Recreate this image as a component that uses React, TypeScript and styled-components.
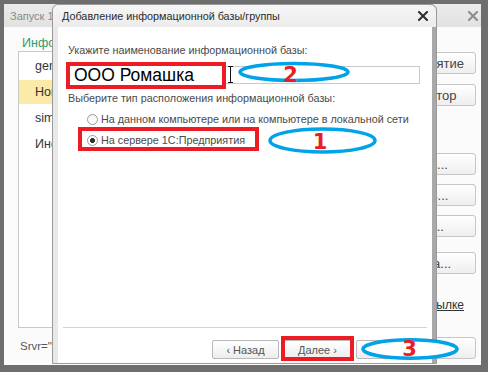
import React from 'react';
import styled, { createGlobalStyle } from 'styled-components';

const GlobalStyle = createGlobalStyle`
  html, body {
    margin: 0;
    padding: 0;
    background: #6e6e6e;
  }
  body {
    font-family: 'Liberation Sans', Arial, sans-serif;
  }
`;

const Desktop = styled.div`
  position: relative;
  width: 488px;
  height: 372px;
  overflow: hidden;
  background: #6e6e6e;
`;

/* ---------- back window (launcher) ---------- */

const BackWindow = styled.div`
  position: absolute;
  left: 4px;
  top: 4px;
  width: 477px;
  height: 361px;
  display: flex;
  flex-direction: column;
  background: #fbfbfb;
`;

const BackTitle = styled.div`
  flex: 0 0 23px;
  display: flex;
  align-items: center;
  justify-content: space-between;
  padding: 0 3px 0 6px;
  background: linear-gradient(#ececec, #e1e1e1);
  color: #8a8a8a;
  font-size: 11px;
`;

const BackBody = styled.div`
  flex: 1;
  min-height: 0;
  display: flex;
  gap: 10px;
  padding: 8px 5px 6px 14px;
`;

const LeftColumn = styled.div`
  flex: 1;
  display: flex;
  flex-direction: column;
  min-width: 0;
`;

const BasesHeading = styled.div`
  height: 16px;
  line-height: 16px;
  padding-left: 4px;
  color: #2f9a6c;
  font-size: 12.5px;
`;

const BaseList = styled.div`
  flex: 1;
  border: 1px solid #c9c9c9;
  background: #fff;
`;

const BaseItem = styled.div<{ $selected?: boolean }>`
  height: 24px;
  margin: 2px 0;
  line-height: 24px;
  padding-left: 16px;
  font-size: 12.5px;
  color: #333;
  white-space: nowrap;
  background: ${(p) => (p.$selected ? '#fbeaa8' : 'transparent')};
`;

const ConnString = styled.div`
  margin: 10px 0 5px 2px;
  height: 16px;
  line-height: 16px;
  font-size: 11.5px;
  color: #555;
  white-space: nowrap;
`;

const RightColumn = styled.div`
  flex: 0 0 120px;
  display: flex;
  flex-direction: column;
  padding-top: 17px;
`;

const SideButton = styled.div<{ $gap?: number }>`
  height: 22px;
  box-sizing: border-box;
  margin-top: ${(p) => p.$gap ?? 0}px;
  border: 1px solid #c6c6c6;
  border-radius: 3px;
  background: linear-gradient(#ffffff, #eeeeee);
  display: flex;
  align-items: center;
  justify-content: center;
  font-size: 13px;
  color: #444;
  white-space: nowrap;
`;

const SideLink = styled.div`
  margin-top: 24px;
  height: 14px;
  line-height: 14px;
  text-align: right;
  padding-right: 12px;
  font-size: 12px;
  color: #333;
  text-decoration: underline;
  white-space: nowrap;
`;

const ExitButton = styled(SideButton)`
  margin-top: auto;
`;

/* ---------- dialog ---------- */

const Dialog = styled.div`
  position: absolute;
  left: 52px;
  top: 4px;
  width: 385px;
  height: 360px;
  box-sizing: border-box;
  display: flex;
  flex-direction: column;
  background: #e8e8e8;
  border: 1px solid #9a9a9a;
  border-radius: 6px 6px 0 0;
  box-shadow: inset -4px 0 0 #a9a9a9;
`;

const DialogTitle = styled.div`
  flex: 0 0 22px;
  display: flex;
  align-items: center;
  justify-content: space-between;
  padding: 0 8px 0 9px;
  border-radius: 6px 6px 0 0;
  background: linear-gradient(#f6f6f6, #ececec);
  color: #2b2b2b;
  font-size: 10.8px;
`;

const DialogBody = styled.div`
  flex: 1;
  margin: 0 4px 0 5px;
  background: #fff;
  display: flex;
  flex-direction: column;
`;

const FieldLabel = styled.div<{ $top: number }>`
  margin: ${(p) => p.$top}px 0 0 10px;
  height: 14px;
  line-height: 14px;
  font-size: 10.8px;
  color: #4a4a4a;
  white-space: nowrap;
`;

const NameInput = styled.div`
  margin: 9px 0 0 10px;
  width: 352px;
  height: 18px;
  box-sizing: border-box;
  border: 1px solid #c9c9c9;
  background: #fff;
`;

const RadioList = styled.div`
  margin-top: 7px;
  padding-left: 29px;
  display: flex;
  flex-direction: column;
  gap: 7px;
`;

const RadioRow = styled.div`
  height: 14px;
  display: flex;
  align-items: center;
  gap: 3px;
  font-size: 10.8px;
  color: #4a4a4a;
  white-space: nowrap;
`;

const RadioDot = styled.span<{ $checked?: boolean }>`
  width: 11px;
  height: 11px;
  box-sizing: border-box;
  border-radius: 50%;
  border: 1px solid #9c9c9c;
  background: ${(p) =>
    p.$checked
      ? 'radial-gradient(circle, #333 0 2.2px, #fff 2.8px)'
      : 'linear-gradient(#f4f4f4, #ffffff)'};
`;

const Spacer = styled.div`
  flex: 1;
`;

const Separator = styled.div`
  height: 1px;
  margin: 0 5px;
  background: #d3d3d3;
`;

const WizardRow = styled.div`
  margin-top: 12px;
  padding: 0 9px 4px 0;
  display: flex;
  justify-content: flex-end;
  gap: 5px;
`;

const WizardButton = styled.div`
  width: 67px;
  height: 19px;
  box-sizing: border-box;
  border: 1px solid #b9b9b9;
  border-radius: 2px;
  background: linear-gradient(#ffffff, #ededed);
  display: flex;
  align-items: center;
  justify-content: center;
  font-size: 11px;
  color: #555;
`;

/* ---------- annotations ---------- */

const RedFrame = styled.div<{ $x: number; $y: number; $w: number; $h: number; $filled?: boolean }>`
  position: absolute;
  left: ${(p) => p.$x}px;
  top: ${(p) => p.$y}px;
  width: ${(p) => p.$w}px;
  height: ${(p) => p.$h}px;
  box-sizing: border-box;
  border: 4px solid #ed1c24;
  background: ${(p) => (p.$filled ? '#fff' : 'transparent')};
  display: flex;
  align-items: center;
  padding-left: 4px;
  font-size: 17.5px;
  color: #000;
  white-space: nowrap;
`;

const Overlay = styled.svg`
  position: absolute;
  left: 0;
  top: 0;
  pointer-events: none;
`;

const CloseIcon = ({ color, size }: { color: string; size: number }) => (
  <svg width={size} height={size} viewBox="0 0 10 10">
    <path d="M1 1L9 9M9 1L1 9" stroke={color} strokeWidth="2" strokeLinecap="square" />
  </svg>
);

const marks = [
  { cx: 294, cy: 72, rx: 54, ry: 8.5, label: '2', tx: 290.5, ty: 82 },
  { cx: 322.5, cy: 140.5, rx: 52.5, ry: 11.5, label: '1', tx: 320, ty: 149 },
  { cx: 410, cy: 349, rx: 47, ry: 9.3, label: '3', tx: 409.5, ty: 356 },
];

const App = () => {
  return (
    <Desktop>
      <GlobalStyle />

      <BackWindow>
        <BackTitle>
          <span>Запуск 1С:Предприятия</span>
          <CloseIcon color="#8c8c8c" size={10} />
        </BackTitle>
        <BackBody>
          <LeftColumn>
            <BasesHeading>Информационные базы</BasesHeading>
            <BaseList>
              <BaseItem>general</BaseItem>
              <BaseItem $selected>Новая база</BaseItem>
              <BaseItem>simple</BaseItem>
              <BaseItem>Инфобаза</BaseItem>
            </BaseList>
            <ConnString>Srvr="localhost";Ref="roma";</ConnString>
          </LeftColumn>
          <RightColumn>
            <SideButton>1С:Предприятие</SideButton>
            <SideButton $gap={10}>Конфигуратор</SideButton>
            <SideButton $gap={47}>Добавить...</SideButton>
            <SideButton $gap={9}>Изменить...</SideButton>
            <SideButton $gap={9}>Удалить...</SideButton>
            <SideButton $gap={15}>Настройка...</SideButton>
            <SideLink>Добавить по ссылке</SideLink>
            <ExitButton>Выход</ExitButton>
          </RightColumn>
        </BackBody>
      </BackWindow>

      <Dialog>
        <DialogTitle>
          <span>Добавление информационной базы/группы</span>
          <CloseIcon color="#2e2e2e" size={10} />
        </DialogTitle>
        <DialogBody>
          <FieldLabel $top={16}>Укажите наименование информационной базы:</FieldLabel>
          <NameInput />
          <FieldLabel $top={7}>Выберите тип расположения информационной базы:</FieldLabel>
          <RadioList>
            <RadioRow>
              <RadioDot />
              На данном компьютере или на компьютере в локальной сети
            </RadioRow>
            <RadioRow>
              <RadioDot $checked />
              На сервере 1С:Предприятия
            </RadioRow>
          </RadioList>
          <Spacer />
          <Separator />
          <WizardRow>
            <WizardButton>‹ Назад</WizardButton>
            <WizardButton>Далее ›</WizardButton>
            <WizardButton>Отмена</WizardButton>
          </WizardRow>
        </DialogBody>
      </Dialog>

      <RedFrame $x={66} $y={62} $w={160} $h={27} $filled>
        ООО Ромашка
      </RedFrame>
      <RedFrame $x={78} $y={127} $w={181} $h={24} />
      <RedFrame $x={281} $y={336} $w={73} $h={25} />

      <Overlay width={488} height={372} viewBox="0 0 488 372">
        <path
          d="M228 66.5h5M230.5 67v15M228 82.5h5"
          stroke="#111"
          strokeWidth="1"
          fill="none"
        />
        {marks.map((m) => (
          <g key={m.label}>
            <ellipse
              cx={m.cx}
              cy={m.cy}
              rx={m.rx}
              ry={m.ry}
              fill="#fff"
              stroke="#00a2e8"
              strokeWidth="3.5"
            />
            <text
              x={m.tx}
              y={m.ty}
              textAnchor="middle"
              fill="#ed1c24"
              fontFamily="'DejaVu Sans', sans-serif"
              fontWeight="bold"
              fontSize="21"
            >
              {m.label}
            </text>
          </g>
        ))}
      </Overlay>
    </Desktop>
  );
};

export default App;
